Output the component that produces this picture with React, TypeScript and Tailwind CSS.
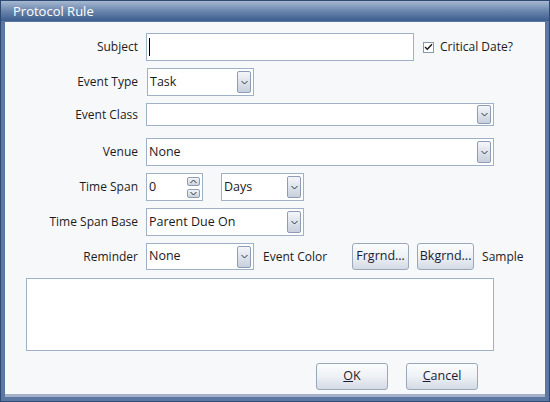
import React from 'react';

const font = { fontFamily: '"Open Sans", "Liberation Sans", sans-serif' };

function Chevron({ up = false }: { up?: boolean }) {
  return (
    <svg width="7" height="5" viewBox="0 0 7 5" className="block">
      <path
        d={up ? 'M0.5 4 L3.5 1 L6.5 4' : 'M0.5 1 L3.5 4 L6.5 1'}
        fill="none"
        stroke="#2b3445"
        strokeWidth="1"
      />
    </svg>
  );
}

function DropButton({ h = 'h-[22px]' }: { h?: string }) {
  return (
    <div
      className={`w-[14px] ${h} flex items-center justify-center rounded-[2px] border border-[#8d9db5] bg-gradient-to-b from-[#f4f6f9] to-[#c8d0dc]`}
    >
      <Chevron />
    </div>
  );
}

function Select({ value, width, height = 'h-[28px]', btn = 'h-[22px]' }: { value: string; width: string; height?: string; btn?: string }) {
  return (
    <div className={`${width} ${height} flex items-center justify-between border border-[#9fb0c7] bg-white pl-[2px] pr-[2px]`}>
      <span className="text-[12.5px] text-[#1a1a1a] leading-none">{value}</span>
      <DropButton h={btn} />
    </div>
  );
}

function Label({ children }: { children: React.ReactNode }) {
  return (
    <div className="w-[133px] shrink-0 text-right text-[12px] text-[#1c1c1c] pr-0">{children}</div>
  );
}

function Btn({ children, w }: { children: React.ReactNode; w: string }) {
  return (
    <div
      className={`${w} h-[27px] flex items-center justify-center rounded-[3px] border border-[#9ba8ba] bg-gradient-to-b from-[#fbfcfd] via-[#eef1f5] to-[#d3dae4] text-[12.5px] text-[#1b1b33]`}
    >
      {children}
    </div>
  );
}

export default function App() {
  return (
    <div style={font} className="w-[550px] h-[402px] flex flex-col bg-[#5c78a2] border border-[#2e4a74]">
      {/* Title bar */}
      <div className="h-[20px] flex items-center px-[12px] bg-gradient-to-b from-[#a7b8d1] via-[#6a86ad] to-[#3d5d8e]">
        <span className="text-[13px] text-white leading-none">Protocol Rule</span>
      </div>

      {/* Body */}
      <div className="flex-1 mx-[4px] mb-[4px] mt-[1px] bg-[#f7f8fa] border-b-[3px] border-[#a3b2c8] flex flex-col">
        {/* Subject */}
        <div className="mt-[11px] flex items-center gap-[8px]">
          <Label>Subject</Label>
          <div className="w-[268px] h-[28px] border border-[#9fb0c7] bg-white flex items-center pl-[2px]">
            <span className="w-[1px] h-[18px] bg-black" />
          </div>
          <div className="ml-[1px] flex items-center gap-[6px]">
            <div className="w-[11px] h-[11px] border border-[#8797ad] bg-white flex items-center justify-center">
              <svg width="9" height="8" viewBox="0 0 9 8">
                <path d="M1 4 L3.3 6.3 L8 1.2" fill="none" stroke="#1a1a1a" strokeWidth="1.4" />
              </svg>
            </div>
            <span className="text-[12px] text-[#1c1c1c]">Critical Date?</span>
          </div>
        </div>

        {/* Event Type */}
        <div className="mt-[7px] flex items-center gap-[9px]">
          <Label>Event Type</Label>
          <Select value="Task" width="w-[107px]" />
        </div>

        {/* Event Class */}
        <div className="mt-[7px] flex items-center gap-[8px]">
          <Label>Event Class</Label>
          <Select value="" width="w-[348px]" height="h-[23px]" btn="h-[19px]" />
        </div>

        {/* Venue */}
        <div className="mt-[12px] flex items-center gap-[8px]">
          <Label>Venue</Label>
          <Select value="None" width="w-[348px]" />
        </div>

        {/* Time Span */}
        <div className="mt-[7px] flex items-center gap-[8px]">
          <Label>Time Span</Label>
          <div className="w-[57px] h-[28px] border border-[#9fb0c7] bg-white flex items-center justify-between pl-[2px] pr-[2px]">
            <span className="text-[12.5px] text-[#1a1a1a] leading-none">0</span>
            <div className="flex flex-col gap-[3px]">
              <div className="w-[13px] h-[9px] flex items-center justify-center rounded-[2px] border border-[#8d9db5] bg-gradient-to-b from-[#f4f6f9] to-[#c8d0dc]">
                <Chevron up />
              </div>
              <div className="w-[13px] h-[9px] flex items-center justify-center rounded-[2px] border border-[#8d9db5] bg-gradient-to-b from-[#f4f6f9] to-[#c8d0dc]">
                <Chevron />
              </div>
            </div>
          </div>
          <div className="ml-[10px]">
            <Select value="Days" width="w-[83px]" />
          </div>
        </div>

        {/* Time Span Base */}
        <div className="mt-[7px] flex items-center gap-[8px]">
          <Label>Time Span Base</Label>
          <Select value="Parent Due On" width="w-[158px]" />
        </div>

        {/* Reminder */}
        <div className="mt-[7px] flex items-center gap-[8px]">
          <Label>Reminder</Label>
          <Select value="None" width="w-[108px]" height="h-[27px]" />
          <span className="ml-[1px] text-[12px] text-[#1c1c1c]">Event Color</span>
          <div className="ml-[17px] flex items-center gap-[8px]">
            <Btn w="w-[57px]">Frgrnd...</Btn>
            <Btn w="w-[57px]">Bkgrnd...</Btn>
          </div>
          <span className="text-[12px] text-[#1c1c1c]">Sample</span>
        </div>

        {/* Notes */}
        <div className="mt-[8px] ml-[21px] w-[468px] h-[73px] border border-[#9fb0c7] bg-white" />

        {/* Buttons */}
        <div className="mt-[12px] ml-[311px] flex items-center gap-[18px]">
          <Btn w="w-[72px]">
            <span>
              <span className="underline">O</span>K
            </span>
          </Btn>
          <Btn w="w-[72px]">
            <span>
              <span className="underline">C</span>ancel
            </span>
          </Btn>
        </div>
      </div>
    </div>
  );
}
